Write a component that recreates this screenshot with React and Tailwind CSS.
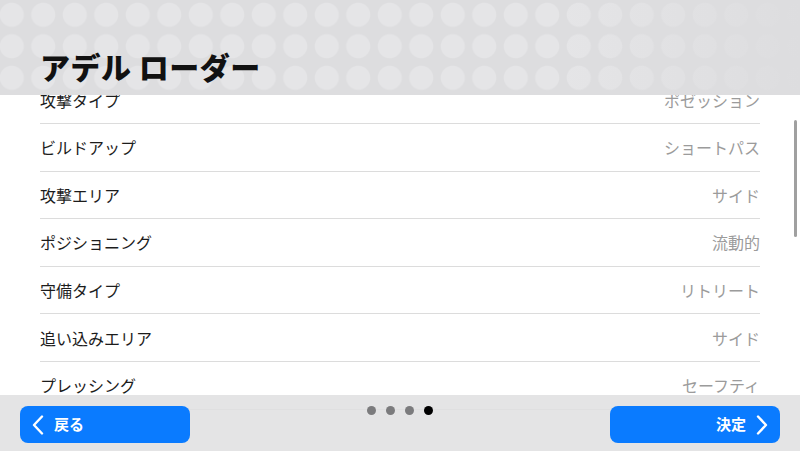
import React from "react";

const rows = [
  { label: "攻撃タイプ", value: "ポゼッション" },
  { label: "ビルドアップ", value: "ショートパス" },
  { label: "攻撃エリア", value: "サイド" },
  { label: "ポジショニング", value: "流動的" },
  { label: "守備タイプ", value: "リトリート" },
  { label: "追い込みエリア", value: "サイド" },
  { label: "プレッシング", value: "セーフティ" },
  { label: "ディフェンスライン", value: "5" },
  { label: "コンパクトネス", value: "5" },
];

const Chevron = ({ dir }) => (
  <svg width="12" height="20" viewBox="0 0 12 20" fill="none">
    <polyline
      points={dir === "left" ? "10,1.5 2,10 10,18.5" : "2,1.5 10,10 2,18.5"}
      stroke="white"
      strokeWidth="2.4"
      strokeLinecap="round"
      strokeLinejoin="round"
    />
  </svg>
);

const App = () => {
  return (
    <div className="relative w-[800px] h-[451px] overflow-hidden bg-white flex flex-col font-['Noto_Sans_CJK_JP','Noto_Sans',sans-serif]">
      {/* header */}
      <div className="relative z-10 h-[95px] shrink-0 bg-[#dddddf] bg-[radial-gradient(circle,#e5e5e7_11.5px,transparent_12.5px)] bg-[length:31.5px_31.5px] bg-[position:-4px_-1px]">
        <div className="h-full bg-[linear-gradient(to_right,transparent_70%,#dddddf_100%)] flex items-end px-10 pb-[14px]">
          <h1 className="text-[30px] leading-none font-black text-[#111] tracking-[0.5px]">
            アデル ローダー
          </h1>
        </div>
      </div>

      {/* list */}
      <div className="flex-1 overflow-hidden">
        <div className="-mt-[18.6px] px-10">
          {rows.map((row, idx) => (
            <div
              key={idx}
              className="h-[47.6px] border-b border-[#dcdcdc] flex items-center justify-between text-[16px]"
            >
              <span className="text-[#1c1c1c]">{row.label}</span>
              <span className="text-[#9b9b9b]">{row.value}</span>
            </div>
          ))}
        </div>
      </div>

      {/* scrollbar */}
      <div className="absolute left-[794px] top-[120px] w-[3px] h-[117px] rounded-full bg-[#a0a0a0]" />

      {/* footer */}
      <div className="absolute bottom-0 left-0 right-0 h-[56px] bg-[#dfdfe1]/85 flex items-start justify-between px-5 pt-[11px]">
        <button className="w-[170px] h-[37px] rounded-[8px] bg-[#0a7bff] flex items-center gap-[10px] pl-[12px] text-white text-[15px] font-bold">
          <Chevron dir="left" />
          <span>戻る</span>
        </button>
        <div className="flex items-center gap-[10px]">
          <span className="w-[9px] h-[9px] rounded-full bg-[#7b7b7d]" />
          <span className="w-[9px] h-[9px] rounded-full bg-[#7b7b7d]" />
          <span className="w-[9px] h-[9px] rounded-full bg-[#7b7b7d]" />
          <span className="w-[9px] h-[9px] rounded-full bg-black" />
        </div>
        <button className="w-[170px] h-[37px] rounded-[8px] bg-[#0a7bff] flex items-center justify-end gap-[10px] pr-[12px] text-white text-[15px] font-bold">
          <span>決定</span>
          <Chevron dir="right" />
        </button>
      </div>
    </div>
  );
};

export default App;
